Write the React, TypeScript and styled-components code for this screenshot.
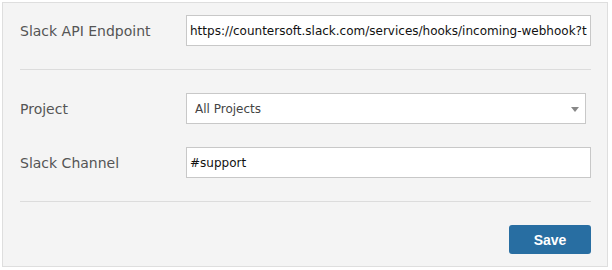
import React from "react"
import styled, { createGlobalStyle } from "styled-components"

const GlobalStyle = createGlobalStyle`
    html, body {
        margin: 0;
        padding: 0;
        background: #ffffff;
    }
`

const Panel = styled.div`
    box-sizing: border-box;
    width: 606px;
    height: 265px;
    margin: 2px 0 0 2px;
    padding: 12px 15px 0 17px;
    background: #f4f4f4;
    border: 1px solid #dedede;
    font-family: "DejaVu Sans", Verdana, sans-serif;
`

const Row = styled.div<{ $last?: boolean }>`
    display: flex;
    align-items: center;
    margin-bottom: ${({ $last }) => ($last ? "0" : "23px")};
`

const Label = styled.label`
    width: 166px;
    flex-shrink: 0;
    font-size: 14px;
    color: #555555;
`

const TextInput = styled.input<{ $width?: number }>`
    box-sizing: border-box;
    width: ${({ $width }) => $width ?? 405}px;
    height: 31px;
    padding: 0 3px;
    border: 1px solid #c8c8c8;
    background: #ffffff;
    font-family: "DejaVu Sans", Verdana, sans-serif;
    font-size: 12px;
    color: #111111;
    outline: none;
`

const SelectBox = styled.div`
    position: relative;
    box-sizing: border-box;
    width: 400px;
    height: 31px;
    padding: 0 8px;
    display: flex;
    align-items: center;
    border: 1px solid #c8c8c8;
    background: #ffffff;
    font-size: 12px;
    color: #444444;
`

const Arrow = styled.span`
    position: absolute;
    right: 6px;
    top: 13px;
    width: 0;
    height: 0;
    border-left: 4px solid transparent;
    border-right: 4px solid transparent;
    border-top: 5px solid #888888;
`

const Divider = styled.hr`
    margin: 0 0 23px 0;
    border: none;
    border-top: 1px solid #dcdcdc;
    width: 571px;
`

const Footer = styled.div`
    display: flex;
    justify-content: flex-end;
    width: 571px;
`

const SaveButton = styled.button`
    width: 82px;
    height: 29px;
    border: none;
    border-radius: 3px;
    background: #286ea2;
    color: #ffffff;
    font-family: "Liberation Sans", Arial, sans-serif;
    font-weight: bold;
    font-size: 14px;
    cursor: pointer;
`

export default function App() {
    return (
        <>
            <GlobalStyle />
            <Panel>
                <Row>
                    <Label>Slack API Endpoint</Label>
                    <TextInput
                        readOnly
                        value="https://countersoft.slack.com/services/hooks/incoming-webhook?token=abc"
                    />
                </Row>
                <Divider />
                <Row>
                    <Label>Project</Label>
                    <SelectBox>
                        All Projects
                        <Arrow />
                    </SelectBox>
                </Row>
                <Row>
                    <Label>Slack Channel</Label>
                    <TextInput readOnly value="#support" />
                </Row>
                <Divider />
                <Footer>
                    <SaveButton>Save</SaveButton>
                </Footer>
            </Panel>
        </>
    )
}
